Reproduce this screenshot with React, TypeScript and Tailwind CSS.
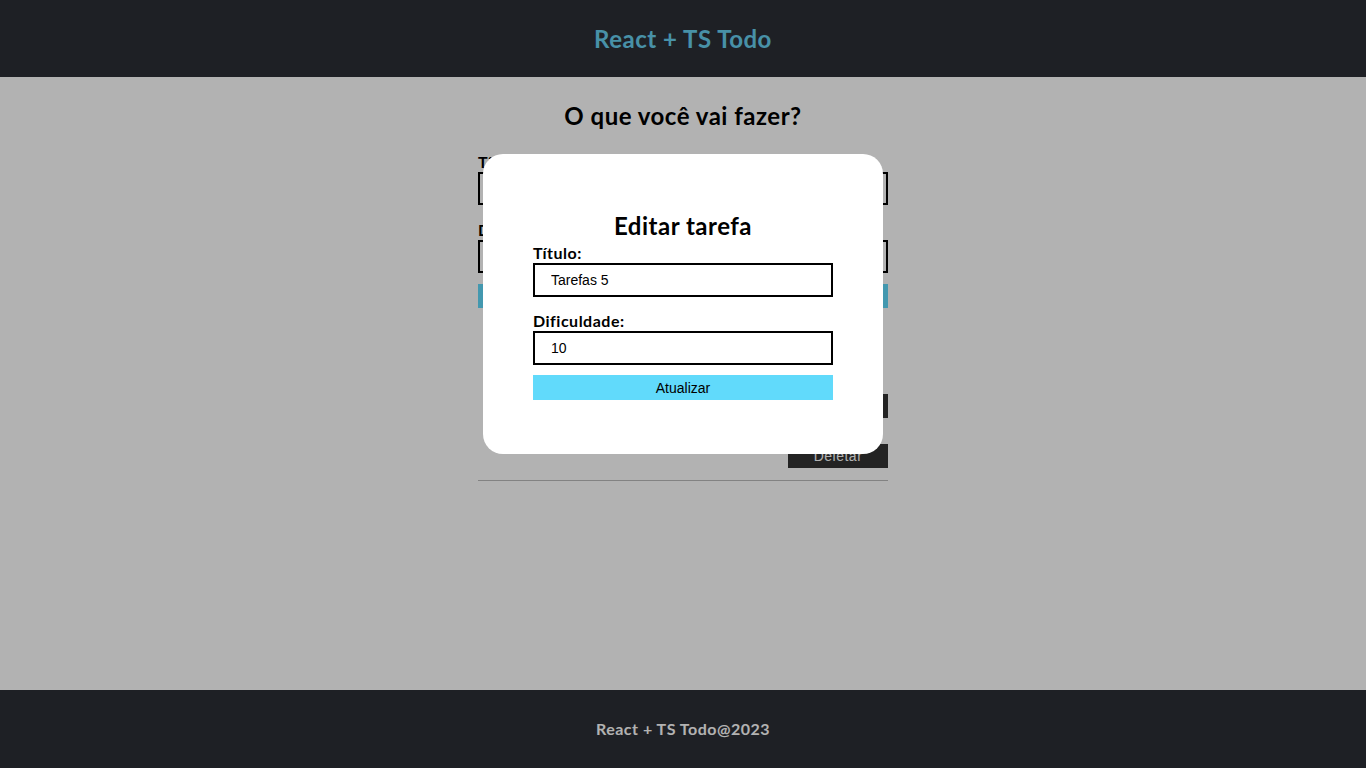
const ui = { fontFamily: 'Lato, "Noto Sans", sans-serif' }
const field = { fontFamily: '"Liberation Sans", Arial, sans-serif' }

function TaskItem({ title, difficulty }: { title: string; difficulty: number }) {
  return (
    <div className="flex items-center justify-between border-b border-[#bbb] py-[12px]">
      <div className="pl-[24px]">
        <h4 className="text-lg font-bold">{title}</h4>
        <p className="text-sm">Dificuldade: {difficulty}</p>
      </div>
      <div className="flex flex-col gap-[26px]">
        <button className="h-6 w-[100px] bg-[#333] text-sm text-white" style={field}>Editar</button>
        <button className="h-6 w-[100px] bg-[#333] text-sm text-white" style={field}>Deletar</button>
      </div>
    </div>
  )
}

export default function App() {
  return (
    <div className="flex min-h-screen flex-col tracking-[0.5px]" style={ui}>
      <header className="flex h-[77px] items-center justify-center bg-[#2c2e35]">
        <h1 className="text-[24px] font-bold text-[#68d0f0]">React + TS Todo</h1>
      </header>

      <main className="flex flex-1 flex-col items-center bg-white">
        <div className="w-[410px]">
          <h2 className="mt-[23px] text-center text-[24px] font-bold leading-8">O que você vai fazer?</h2>
          <form className="mt-[20px] flex flex-col">
            <label className="text-base font-bold leading-5">Título:</label>
            <input className="h-[33px] border-2 border-black px-4 text-sm" style={field} placeholder="Título da tarefa" />
            <label className="mt-[15px] text-base font-bold leading-5">Dificuldade:</label>
            <input className="h-[33px] border-2 border-black px-4 text-sm" style={field} placeholder="Dificuldade da tarefa" />
            <button type="button" className="mt-[11px] h-6 w-full bg-[#61dafb] text-sm" style={field}>Cadastrar tarefa</button>
          </form>
          <div className="mt-[44px]">
            <h2 className="text-center text-[20px] font-bold">Suas tarefas:</h2>
            <TaskItem title="Tarefas 5" difficulty={10} />
          </div>
        </div>
      </main>

      <footer className="flex h-[78px] items-center justify-center bg-[#2c2e35]">
        <p className="text-base font-bold text-white">React + TS Todo@2023</p>
      </footer>

      <div className="fixed inset-0 flex justify-center bg-black/30 pt-[154px]">
        <div className="h-[300px] w-[400px] rounded-[20px] bg-white px-[50px] pt-[56px]">
          <h2 className="text-center text-[24px] font-bold leading-8">Editar tarefa</h2>
          <form className="flex flex-col">
            <label className="text-base font-bold leading-[21px]">Título:</label>
            <input className="h-[34px] border-2 border-black px-4 text-sm tracking-normal" style={field} defaultValue="Tarefas 5" />
            <label className="mt-[14px] text-base font-bold leading-5">Dificuldade:</label>
            <input className="h-[34px] border-2 border-black px-4 text-sm tracking-normal" style={field} defaultValue="10" />
            <button type="button" className="mt-[10px] h-[25px] w-full bg-[#61dafb] text-sm tracking-normal" style={field}>Atualizar</button>
          </form>
        </div>
      </div>
    </div>
  )
}
